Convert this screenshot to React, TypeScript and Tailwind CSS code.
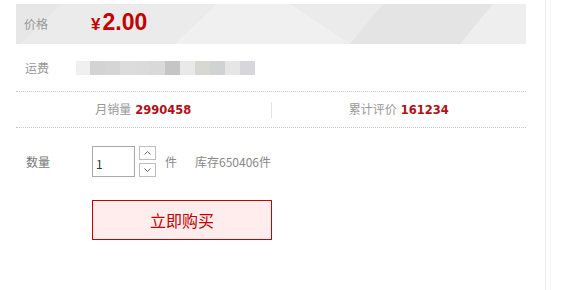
const blurBlocks = [
  "#f0f0f0",
  "#d3d3d3",
  "#d5d5d5",
  "#dcdcdc",
  "#dbdbdb",
  "#d9d9d9",
  "#c5c5c5",
  "#e9e9e9",
  "#d8d8d3",
  "#cfd3d3",
  "#e6e6e6",
  "#d6d6dc",
];

const cjk = "font-['Noto_Sans_CJK_SC',sans-serif]";

function PriceBackdrop() {
  return (
    <svg
      className="absolute inset-0 h-full w-full"
      viewBox="0 0 510 40"
      preserveAspectRatio="none"
    >
      <rect width="510" height="40" fill="#ebebeb" />
      <polygon points="0,40 0,0 46,0 4,40" fill="#e7e7e7" />
      <polygon points="159,40 201,0 274,0 334,40" fill="#f0f0f0" />
      <polygon points="334,40 367,0 477,0 444,40" fill="#e4e4e4" />
      <polygon points="444,40 477,0 510,0 510,40" fill="#eeeeee" />
    </svg>
  );
}

function Chevron({ down }: { down?: boolean }) {
  return (
    <svg width="7" height="4" viewBox="0 0 7 4">
      <polyline
        points={down ? "0.5,0.5 3.5,3.5 6.5,0.5" : "0.5,3.5 3.5,0.5 6.5,3.5"}
        fill="none"
        stroke="#666"
        strokeWidth="1"
      />
    </svg>
  );
}

export default function App() {
  return (
    <div className={`flex h-screen min-h-[290px] bg-white ${cjk}`}>
      <div className="w-[545px] shrink-0 pl-4 pr-[19px] pt-1">
        {/* price */}
        <div className="relative flex h-10 items-center">
          <PriceBackdrop />
          <span className="relative w-[76px] pl-2 text-xs text-[#999]">价格</span>
          <span className="relative -ml-px flex items-baseline font-['Liberation_Sans',sans-serif] font-bold text-[#c40000]">
            <span className="mr-[2px] text-[17px]">¥</span>
            <span className="text-[23px] leading-none">2.00</span>
          </span>
        </div>

        {/* shipping */}
        <div className="flex h-12 items-center border-b border-dotted border-[#c8c8c8]">
          <span className="w-[60px] pl-[9px] text-xs text-[#999]">运费</span>
          <div className="flex h-[14px]">
            {blurBlocks.map((c, i) => (
              <div
                key={i}
                className={i === 0 ? "w-[14px]" : "w-[15px]"}
                style={{ backgroundColor: c }}
              />
            ))}
          </div>
        </div>

        {/* stats */}
        <div className="flex h-9 items-center border-b border-dotted border-[#c8c8c8] text-xs">
          <div className="flex flex-1 justify-center">
            <span className="text-[#999]">月销量</span>
            <span className="ml-1 font-['DejaVu_Sans',sans-serif] text-[11.5px] font-bold leading-[18px] text-[#b0101a]">
              2990458
            </span>
          </div>
          <div className="h-4 w-px bg-[#e3e3e3]" />
          <div className="flex flex-1 justify-center">
            <span className="text-[#999]">累计评价</span>
            <span className="ml-1 font-['DejaVu_Sans',sans-serif] text-[11.5px] font-bold leading-[18px] text-[#b0101a]">
              161234
            </span>
          </div>
        </div>

        {/* quantity */}
        <div className="mt-[18px] flex items-center">
          <span className="w-[76px] pl-[10px] text-xs text-[#777]">数量</span>
          <div className="flex h-[31px] w-[43px] items-center border border-[#a9a9a9] pl-[3px] pt-1 text-xs text-[#333]">
            1
          </div>
          <div className="ml-[4px] flex h-[31px] flex-col justify-between">
            <button className="flex h-[14px] w-[17px] items-center justify-center border border-[#bdbdbd] bg-white">
              <Chevron />
            </button>
            <button className="flex h-[14px] w-[17px] items-center justify-center border border-[#bdbdbd] bg-white">
              <Chevron down />
            </button>
          </div>
          <span className="ml-[9px] text-xs text-[#888]">件</span>
          <span className="ml-[18px] text-xs text-[#888]">库存650406件</span>
        </div>

        {/* buy */}
        <div className="mt-[23px] pl-[76px]">
          <button className="flex h-10 w-[180px] items-center justify-center border border-[#c40000] bg-[#ffeded] text-base text-[#c40000]">
            立即购买
          </button>
        </div>
      </div>
      <div className="w-px bg-[#ebebeb]" />
      <div className="ml-1 w-px bg-[#f6f6f6]" />
      <div className="flex-1" />
    </div>
  );
}
